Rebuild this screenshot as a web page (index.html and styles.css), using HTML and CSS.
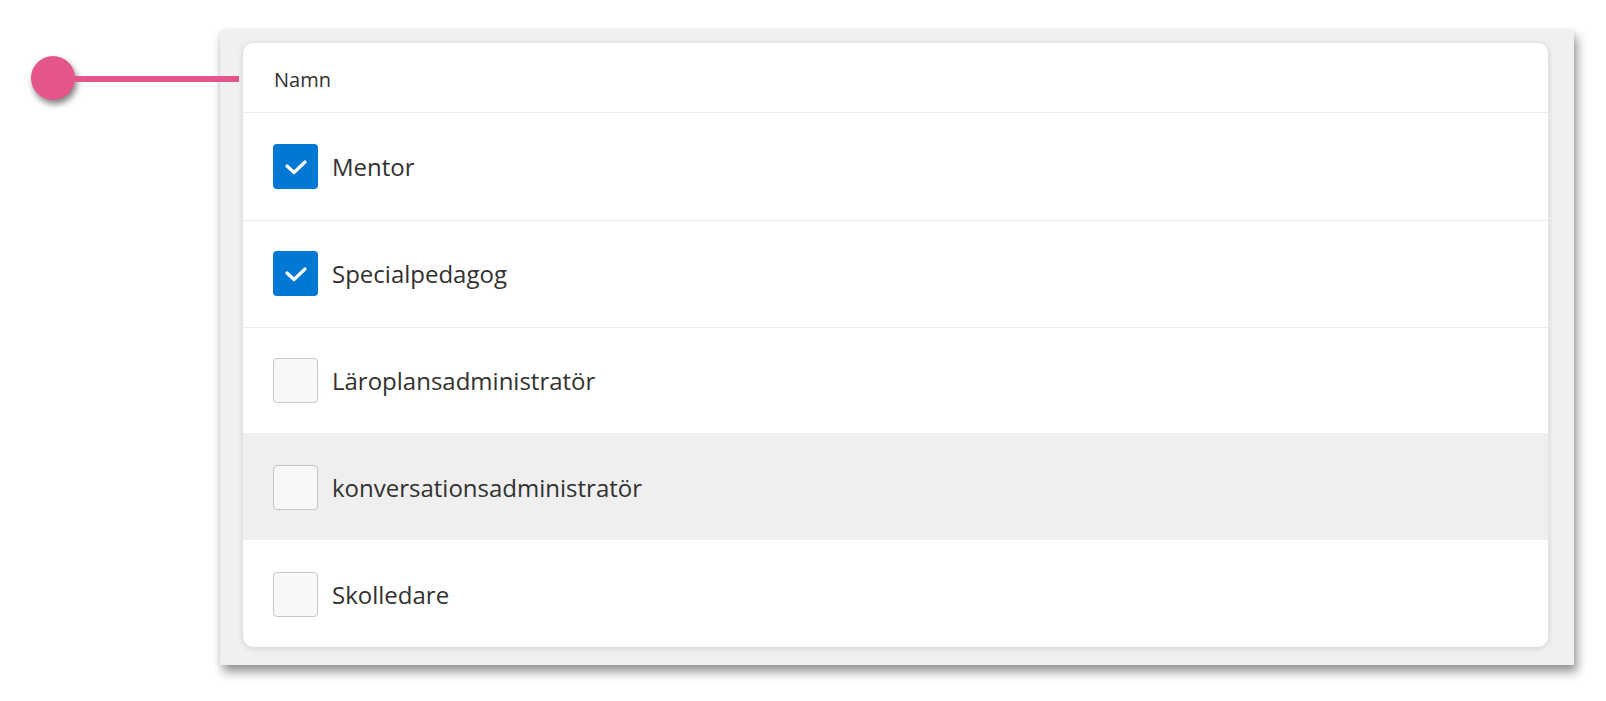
FILE: index.html
```html
<!DOCTYPE html>
<html lang="sv">
<head>
    <meta charset="UTF-8">
    <meta name="viewport" content="width=device-width, initial-scale=1.0">
    <title>Roller</title>
    <link rel="stylesheet" href="styles.css">
</head>
<body>

<div class="page">
    <div class="callout">
        <span class="callout-dot"></span>
        <span class="callout-line"></span>
    </div>

    <div class="frame">
        <div class="card">
            <div class="card-header">Namn</div>

            <label class="row">
                <span class="box checked">
                    <svg viewBox="0 0 45 45" width="45" height="45"><path d="M14 22 L21 28.5 L32 18" fill="none" stroke="#fff" stroke-width="3.2" stroke-linecap="round" stroke-linejoin="round"/></svg>
                </span>
                <span class="row-text">Mentor</span>
            </label>

            <label class="row">
                <span class="box checked">
                    <svg viewBox="0 0 45 45" width="45" height="45"><path d="M14 22 L21 28.5 L32 18" fill="none" stroke="#fff" stroke-width="3.2" stroke-linecap="round" stroke-linejoin="round"/></svg>
                </span>
                <span class="row-text">Specialpedagog</span>
            </label>

            <label class="row">
                <span class="box"></span>
                <span class="row-text">Läroplansadministratör</span>
            </label>

            <label class="row hover">
                <span class="box"></span>
                <span class="row-text">konversationsadministratör</span>
            </label>

            <label class="row">
                <span class="box"></span>
                <span class="row-text">Skolledare</span>
            </label>
        </div>
    </div>
</div>

</body>
</html>
```

FILE: styles.css
```css
body {
    margin: 0;
    background: #fff;
    font-family: "Open Sans", "Noto Sans", Arial, sans-serif;
    color: #323130;
}
.page {
    position: relative;
    min-height: 701px;
    box-sizing: border-box;
    padding: 30px 0 0 220px;
}
.callout {
    position: absolute;
    left: 31px;
    top: 56px;
    display: flex;
    align-items: center;
}
.callout-dot {
    width: 44px;
    height: 44px;
    border-radius: 50%;
    background: #e4568b;
    box-shadow: 2px 4px 6px rgba(0, 0, 0, 0.5);
}
.callout-line {
    width: 164px;
    height: 6px;
    margin-top: 2px;
    background: #e4568b;
}
.frame {
    width: 1354px;
    height: 635px;
    box-sizing: border-box;
    padding: 13px 26px 18px 23px;
    background: #f1f0ef;
    box-shadow: 3px 7px 10px rgba(0, 0, 0, 0.42), 0 0 4px rgba(0, 0, 0, 0.08);
}
.card {
    height: 604px;
    background: #fff;
    border-radius: 10px;
    box-shadow: 0 1px 6px rgba(0, 0, 0, 0.14);
    overflow: hidden;
}
.card-header {
    height: 70px;
    box-sizing: border-box;
    padding: 3px 0 0 31px;
    display: flex;
    align-items: center;
    font-size: 20px;
    border-bottom: 1px solid #ebebeb;
}
.row {
    height: 106.8px;
    box-sizing: border-box;
    display: flex;
    align-items: center;
    padding-left: 30px;
    border-top: 1px solid #ebebeb;
}
.card-header + .row {
    border-top: none;
}
.row.hover {
    background: #efefef;
    border-top-color: #efefef;
}
.row.hover + .row {
    border-top-color: #fff;
}
.box {
    width: 45px;
    height: 45px;
    box-sizing: border-box;
    border: 1px solid #c6c6c6;
    border-radius: 4px;
    background: #f8f8f8;
    display: flex;
    align-items: center;
    justify-content: center;
    flex-shrink: 0;
    overflow: hidden;
}
.box.checked {
    background: #0078d4;
    border: none;
}
.row-text {
    margin-left: 14px;
    font-size: 24px;
}
```
